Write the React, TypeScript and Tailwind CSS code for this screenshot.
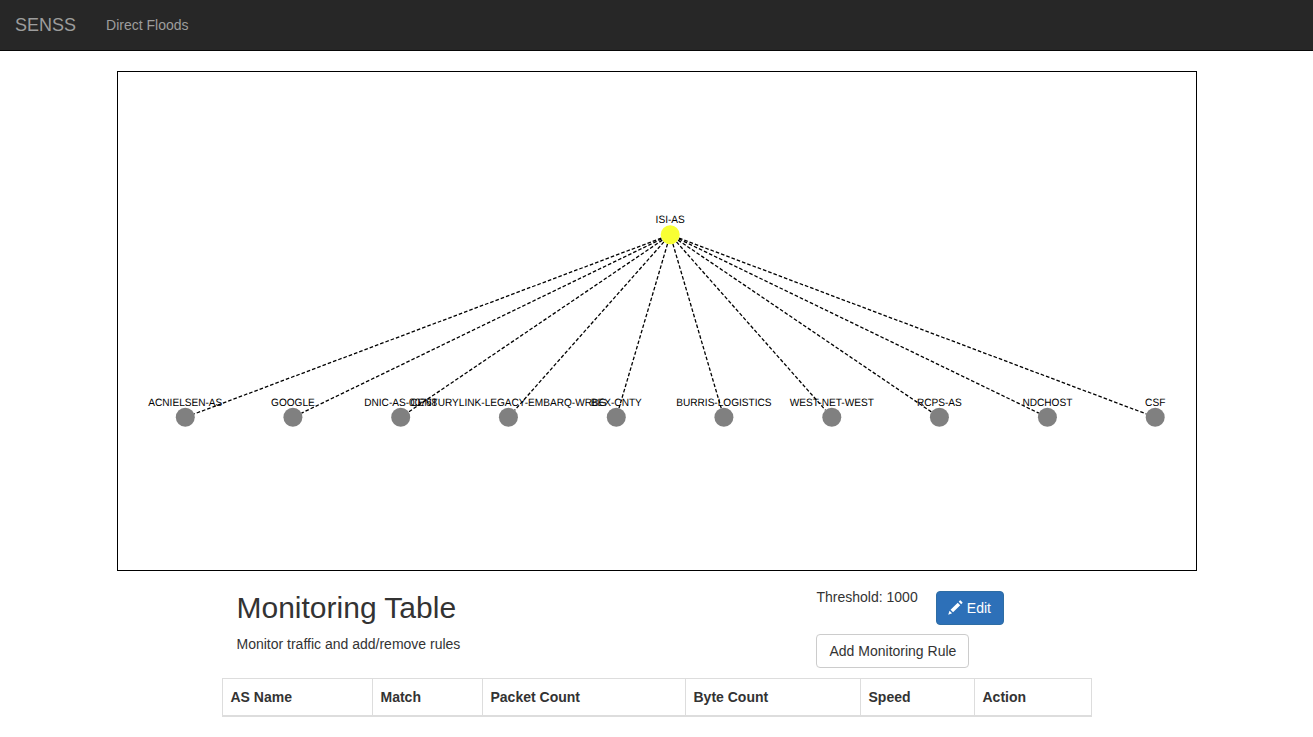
const root = { x: 670.2, y: 234.8, label: "ISI-AS" };

const nodes = [
  { x: 185.3, label: "ACNIELSEN-AS" },
  { x: 292.9, label: "GOOGLE" },
  { x: 400.7, label: "DNIC-AS-00768" },
  { x: 508.4, label: "CENTURYLINK-LEGACY-EMBARQ-WRBG" },
  { x: 616.3, label: "BEX-CNTY" },
  { x: 723.9, label: "BURRIS-LOGISTICS" },
  { x: 831.8, label: "WEST-NET-WEST" },
  { x: 939.4, label: "RCPS-AS" },
  { x: 1047.4, label: "NDCHOST" },
  { x: 1155.2, label: "CSF" },
];
const NODE_Y = 417.3;
const RADIUS = 9.5;

function Topology() {
  return (
    <div className="mx-auto h-[500px] w-[1080px] border border-black">
      <svg className="block h-full w-full" viewBox="118 72 1078 498">
        {nodes.map((n) => {
          const dx = n.x - root.x;
          const dy = NODE_Y - root.y;
          const k = RADIUS / Math.hypot(dx, dy);
          return (
            <line
              key={n.label}
              x1={root.x + dx * k}
              y1={root.y + dy * k}
              x2={n.x - dx * k}
              y2={NODE_Y - dy * k}
              stroke="#000"
              strokeWidth="1.3"
              strokeDasharray="3.6 2"
            />
          );
        })}
        <circle cx={root.x} cy={root.y} r={RADIUS} fill="#f8ff33" />
        {nodes.map((n) => (
          <circle key={n.label} cx={n.x} cy={NODE_Y} r={RADIUS} fill="#808080" />
        ))}
        <g fontSize="10.1" fill="#000" textAnchor="middle" textRendering="geometricPrecision">
          <text transform={`translate(${root.x} 223.4) scale(1 1.05)`}>{root.label}</text>
          {nodes.map((n) => (
            <text key={n.label} transform={`translate(${n.x} 405.9) scale(1 1.05)`}>{n.label}</text>
          ))}
        </g>
      </svg>
    </div>
  );
}

function PencilIcon() {
  return (
    <svg className="relative top-px mr-1 size-3.5 overflow-visible" viewBox="0 0 1200 1200" fill="currentColor">
      <path
        transform="translate(-50 1070) scale(1 -1)"
        d="M1011 1210q19 0 33 -13l153 -153q13 -14 13 -33t-13 -33l-99 -92l-214 214l95 96q13 14 32 14zM1013 800l-615 -614l-214 214l614 614zM317 96l-333 -112l110 335z"
      />
    </svg>
  );
}

const columns = [
  { name: "AS Name", width: "w-[150px]" },
  { name: "Match", width: "w-[110px]" },
  { name: "Packet Count", width: "w-[203px]" },
  { name: "Byte Count", width: "w-[175px]" },
  { name: "Speed", width: "w-[114px]" },
  { name: "Action", width: "w-[117px]" },
];

export default function App() {
  return (
    <div className="h-[737px] overflow-hidden bg-white font-['Liberation_Sans',Arial,sans-serif] text-[14px] leading-5 text-[#333]">
      <nav className="mb-5 flex h-[51px] items-center border-b border-[#080808] bg-[#272727] text-[#9d9d9d]">
        <a className="px-[15px] text-lg leading-5">SENSS</a>
        <a className="px-[15px]">Direct Floods</a>
      </nav>
      <Topology />
      <div className="mx-auto w-[870px]">
        <div className="flex h-[107px] px-[15px]">
          <div className="w-[579.8px] pt-5">
            <h2 className="mb-2.5 text-[30px] leading-[33px] font-medium">Monitoring Table</h2>
            <p>Monitor traffic and add/remove rules</p>
          </div>
          <div className="pt-4">
            <div className="flex items-start">
              <span className="w-[119.5px] pl-[0.2px]">Threshold: 1000</span>
              <button className="mt-1 flex h-[34px] items-center rounded border border-[#2e6da4] bg-[#2d70b8] px-3 text-white">
                <PencilIcon />
                Edit
              </button>
            </div>
            <button className="mt-[9px] h-[34px] rounded border border-[#ccc] bg-white pr-[11.8px] pl-[12.2px]">
              Add Monitoring Rule
            </button>
          </div>
        </div>
        <table className="w-full table-fixed border-collapse border border-[#ddd] text-left">
          <thead>
            <tr>
              {columns.map((c) => (
                <th key={c.name} className={`${c.width} border border-b-2 border-[#ddd] p-2 font-bold`}>
                  {c.name}
                </th>
              ))}
            </tr>
          </thead>
        </table>
      </div>
    </div>
  );
}
